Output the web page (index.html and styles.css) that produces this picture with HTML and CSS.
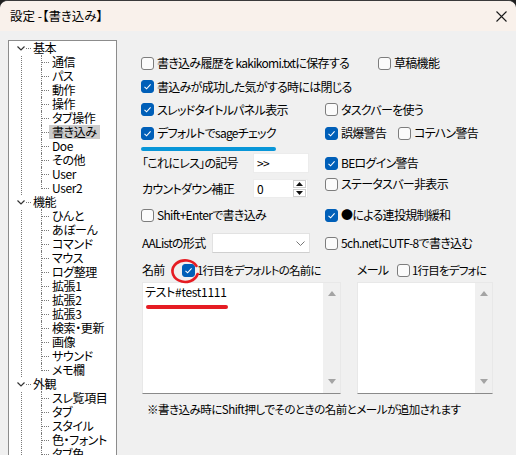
FILE: index.html
```html
<!DOCTYPE html>
<html lang="ja">
<head>
<meta charset="utf-8">
<title>設定 -【書き込み】</title>
<link rel="stylesheet" href="styles.css">
</head>
<body>
<div class="window">
  <div class="titlebar">
    <span class="title">設定 -【書き込み】</span>
    <svg class="close" width="11" height="11" viewBox="0 0 11 11"><path d="M0.5 0.5 L10.5 10.5 M10.5 0.5 L0.5 10.5" stroke="#1a1a1a" stroke-width="1.1" fill="none"/></svg>
  </div>
  <div class="client">
    <ul class="tree">
      <li class="node">
        <div class="trow"><span class="chev"><svg width="8" height="5" viewBox="0 0 8 5"><path d="M0.5 0.5 L4 4 L7.5 0.5" stroke="#333" stroke-width="1.2" fill="none"/></svg></span><span class="hconn top"></span><span class="tlabel top">基本</span></div>
        <ul class="kids">
          <li><div class="trow"><span class="hconn"></span><span class="tlabel">通信</span></div></li>
          <li><div class="trow"><span class="hconn"></span><span class="tlabel">パス</span></div></li>
          <li><div class="trow"><span class="hconn"></span><span class="tlabel">動作</span></div></li>
          <li><div class="trow"><span class="hconn"></span><span class="tlabel">操作</span></div></li>
          <li><div class="trow"><span class="hconn"></span><span class="tlabel">タブ操作</span></div></li>
          <li><div class="trow"><span class="hconn"></span><span class="tlabel sel">書き込み</span></div></li>
          <li><div class="trow"><span class="hconn"></span><span class="tlabel">Doe</span></div></li>
          <li><div class="trow"><span class="hconn"></span><span class="tlabel">その他</span></div></li>
          <li><div class="trow"><span class="hconn"></span><span class="tlabel">User</span></div></li>
          <li class="last"><div class="trow"><span class="hconn"></span><span class="tlabel">User2</span></div></li>
        </ul>
      </li>
      <li class="node">
        <div class="trow"><span class="chev"><svg width="8" height="5" viewBox="0 0 8 5"><path d="M0.5 0.5 L4 4 L7.5 0.5" stroke="#333" stroke-width="1.2" fill="none"/></svg></span><span class="hconn top"></span><span class="tlabel top">機能</span></div>
        <ul class="kids">
          <li><div class="trow"><span class="hconn"></span><span class="tlabel">ひんと</span></div></li>
          <li><div class="trow"><span class="hconn"></span><span class="tlabel">あぼーん</span></div></li>
          <li><div class="trow"><span class="hconn"></span><span class="tlabel">コマンド</span></div></li>
          <li><div class="trow"><span class="hconn"></span><span class="tlabel">マウス</span></div></li>
          <li><div class="trow"><span class="hconn"></span><span class="tlabel">ログ整理</span></div></li>
          <li><div class="trow"><span class="hconn"></span><span class="tlabel">拡張1</span></div></li>
          <li><div class="trow"><span class="hconn"></span><span class="tlabel">拡張2</span></div></li>
          <li><div class="trow"><span class="hconn"></span><span class="tlabel">拡張3</span></div></li>
          <li><div class="trow"><span class="hconn"></span><span class="tlabel">検索・更新</span></div></li>
          <li><div class="trow"><span class="hconn"></span><span class="tlabel">画像</span></div></li>
          <li><div class="trow"><span class="hconn"></span><span class="tlabel">サウンド</span></div></li>
          <li class="last"><div class="trow"><span class="hconn"></span><span class="tlabel">メモ欄</span></div></li>
        </ul>
      </li>
      <li class="node">
        <div class="trow"><span class="chev"><svg width="8" height="5" viewBox="0 0 8 5"><path d="M0.5 0.5 L4 4 L7.5 0.5" stroke="#333" stroke-width="1.2" fill="none"/></svg></span><span class="hconn top"></span><span class="tlabel top">外観</span></div>
        <ul class="kids">
          <li><div class="trow"><span class="hconn"></span><span class="tlabel">スレ覧項目</span></div></li>
          <li><div class="trow"><span class="hconn"></span><span class="tlabel">タブ</span></div></li>
          <li><div class="trow"><span class="hconn"></span><span class="tlabel">スタイル</span></div></li>
          <li><div class="trow"><span class="hconn"></span><span class="tlabel">色・フォント</span></div></li>
          <li><div class="trow"><span class="hconn"></span><span class="tlabel">タブ色</span></div></li>
        </ul>
      </li>
    </ul>

    <div class="pane">
      <div class="frow r1">
        <label class="cb"><span class="box"></span>書き込み履歴を kakikomi.txtに保存する</label>
        <label class="cb"><span class="box"></span>草稿機能</label>
      </div>
      <div class="frow r2">
        <label class="cb"><span class="box on"><svg width="11" height="11" viewBox="0 0 11 11"><path d="M2.5 5.8 L4.6 7.8 L8.6 3.4" stroke="#fff" stroke-width="1.1" fill="none"/></svg></span>書込みが成功した気がする時には閉じる</label>
      </div>
      <div class="frow r3">
        <label class="cb"><span class="box on"><svg width="11" height="11" viewBox="0 0 11 11"><path d="M2.5 5.8 L4.6 7.8 L8.6 3.4" stroke="#fff" stroke-width="1.1" fill="none"/></svg></span>スレッドタイトルパネル表示</label>
        <label class="cb"><span class="box"></span>タスクバーを使う</label>
      </div>
      <div class="frow r4">
        <label class="cb"><span class="box on"><svg width="11" height="11" viewBox="0 0 11 11"><path d="M2.5 5.8 L4.6 7.8 L8.6 3.4" stroke="#fff" stroke-width="1.1" fill="none"/></svg></span>デフォルトでsageチェック</label>
        <div class="pair">
          <label class="cb first"><span class="box on"><svg width="11" height="11" viewBox="0 0 11 11"><path d="M2.5 5.8 L4.6 7.8 L8.6 3.4" stroke="#fff" stroke-width="1.1" fill="none"/></svg></span>誤爆警告</label>
          <label class="cb"><span class="box"></span>コテハン警告</label>
        </div>
      </div>
      <div class="barrow"><div class="bluebar"></div></div>
      <div class="frow r5">
        <div class="field"><span class="flabel w112">「これにレス」の記号</span><span class="edit">&gt;&gt;</span></div>
        <label class="cb"><span class="box on"><svg width="11" height="11" viewBox="0 0 11 11"><path d="M2.5 5.8 L4.6 7.8 L8.6 3.4" stroke="#fff" stroke-width="1.1" fill="none"/></svg></span>BEログイン警告</label>
      </div>
      <div class="frow r6">
        <div class="field spinfield"><span class="flabel w112">カウントダウン補正</span>
          <span class="spin"><span class="spinval">0</span><span class="spinbtns"><span class="sbtn"><svg width="7" height="4" viewBox="0 0 7 4"><path d="M0 4 L3.5 0 L7 4 Z" fill="#111"/></svg></span><span class="sbtn"><svg width="7" height="4" viewBox="0 0 7 4"><path d="M0 0 L3.5 4 L7 0 Z" fill="#111"/></svg></span></span></span>
        </div>
        <label class="cb up"><span class="box"></span>ステータスバー非表示</label>
      </div>
      <div class="frow r7">
        <label class="cb"><span class="box"></span>Shift+Enterで書き込み</label>
        <label class="cb"><span class="box on"><svg width="11" height="11" viewBox="0 0 11 11"><path d="M2.5 5.8 L4.6 7.8 L8.6 3.4" stroke="#fff" stroke-width="1.1" fill="none"/></svg></span>●による連投規制緩和</label>
      </div>
      <div class="frow r8">
        <div class="field"><span class="flabel w71">AAListの形式</span>
          <span class="combo"><svg width="9" height="5" viewBox="0 0 9 5"><path d="M0.5 0.5 L4.5 4.5 L8.5 0.5" stroke="#777" stroke-width="1" fill="none"/></svg></span>
        </div>
        <label class="cb"><span class="box"></span>5ch.netにUTF-8で書き込む</label>
      </div>

      <div class="lower">
        <div class="hdr">
          <span class="hlabel">名前</span>
          <span class="mark"><span class="box on"><svg width="11" height="11" viewBox="0 0 11 11"><path d="M2.5 5.8 L4.6 7.8 L8.6 3.4" stroke="#fff" stroke-width="1.1" fill="none"/></svg></span><svg class="ring" width="32" height="28" viewBox="0 0 32 28"><path d="M26.5 8 A12.8 10.8 0 1 0 27.6 16" stroke="#e51c23" stroke-width="2.6" fill="none" stroke-linecap="round"/></svg></span>
          <span class="htext">1行目をデフォルトの名前に</span>
        </div>
        <div class="hdr">
          <span class="hlabel">メール</span>
          <span class="mark"><span class="box"></span></span>
          <span class="htext">1行目をデフォに</span>
        </div>
        <div class="ta">
          <div class="tacontent">
            <div class="taline">テスト#test1111</div>
            <div class="redline"></div>
          </div>
          <div class="sb"><svg width="8" height="5" viewBox="0 0 8 5"><path d="M0 5 L4 0 L8 5 Z" fill="#a4a4a4"/></svg><svg width="8" height="5" viewBox="0 0 8 5"><path d="M0 0 L4 5 L8 0 Z" fill="#a4a4a4"/></svg></div>
        </div>
        <div class="ta">
          <div class="tacontent"></div>
          <div class="sb"><svg width="8" height="5" viewBox="0 0 8 5"><path d="M0 5 L4 0 L8 5 Z" fill="#a4a4a4"/></svg><svg width="8" height="5" viewBox="0 0 8 5"><path d="M0 0 L4 5 L8 0 Z" fill="#a4a4a4"/></svg></div>
        </div>
      </div>
      <p class="note">※書き込み時にShift押しでそのときの名前とメールが追加されます</p>
    </div>
  </div>
</div>
</body>
</html>
```

FILE: styles.css
```css
html, body {
  margin: 0;
  padding: 0;
  background: #1f1f1f;
}
body {
  width: 516px;
  height: 455px;
  overflow: hidden;
  font-family: "Noto Sans CJK JP", "Noto Sans", sans-serif;
  font-size: 12px;
  font-feature-settings: "palt";
  color: #000;
}
.window {
  height: 455px;
  box-sizing: border-box;
  background: #f0f0f0;
  border-top: 1px solid #3a3a3a;
  border-radius: 8px 8px 0 0;
  overflow: hidden;
}
.titlebar {
  height: 30px;
  background: #f9f1eb;
  display: flex;
  align-items: center;
  justify-content: space-between;
  padding: 0 9px 0 10px;
}
.title {
  font-size: 12.5px;
  line-height: 16px;
}
.close { display: block; }

.client {
  display: flex;
  align-items: flex-start;
  padding: 9px 0 0 8px;
}

/* tree */
.tree {
  flex: none;
  width: 109px;
  height: 440px;
  box-sizing: border-box;
  margin: 0;
  padding: 0 0 0 12px;
  list-style: none;
  background: #fff;
  border: 1px solid #8c8c8c;
  overflow: hidden;
}
.tree ul { list-style: none; margin: 0; padding: 0; }
.node { border-left: 1px dotted #7a7a7a; }
.trow {
  display: flex;
  align-items: flex-start;
  height: 14px;
  line-height: 14px;
  white-space: nowrap;
}
.chev {
  flex: none;
  width: 8px;
  height: 14px;
  margin-left: -5px;
  background: #fff;
  display: flex;
  align-items: center;
  justify-content: center;
}
.chev svg { display: block; }
.hconn {
  flex: none;
  width: 7px;
  height: 7px;
  border-bottom: 1px dotted #7a7a7a;
}
.hconn.top { width: 5px; margin-left: 1px; }
.tlabel {
  padding: 0 3px;
  height: 14px;
  font-size: 12px;
  letter-spacing: -0.4px;
}
.tlabel.top { padding: 0 2px; }
.tlabel.sel { background: #cccccc; }
.kids { margin-left: 19px !important; }
.kids li { border-left: 1px dotted #7a7a7a; }
.kids li.last { border-left: none; }
.kids li.last .hconn { border-left: 1px dotted #7a7a7a; }

/* right pane */
.pane {
  flex: 1;
  margin-left: 24px;
  padding-top: 11px;
  letter-spacing: -0.7px;
}
.frow {
  display: grid;
  grid-template-columns: 184px auto;
  align-items: center;
  white-space: nowrap;
}
.r1 { height: 24px; grid-template-columns: 237px auto; }
.r2 { height: 23px; grid-template-columns: auto; }
.r3 { height: 23px; }
.r4 { height: 24px; }
.r5 { height: 14px; }
.r6 { height: 38px; }
.r7 { height: 20px; }
.r8 { height: 36px; }

.cb {
  display: flex;
  align-items: center;
  line-height: 16px;
  white-space: nowrap;
}
.box {
  flex: none;
  width: 13px;
  height: 13px;
  box-sizing: border-box;
  border: 1px solid #7d7d7d;
  border-radius: 3px;
  background: #fbfbfb;
  margin-right: 3px;
  display: flex;
  align-items: center;
  justify-content: center;
}
.box.on {
  background: #005fb8;
  border-color: #005fb8;
}
.box svg { display: block; }
.pair { display: flex; align-items: center; }
.pair .first { width: 73px; }

.barrow { height: 6px; }
.bluebar {
  margin-top: 2px;
  width: 135px;
  height: 4px;
  border-radius: 2px;
  background: #0896d8;
}

.field { display: flex; align-items: center; }
.flabel { padding-left: 1px; box-sizing: border-box; line-height: 16px; }
.w112 { width: 112px; }
.w71 { width: 71px; }
.edit {
  width: 56px;
  height: 20px;
  box-sizing: border-box;
  background: #fff;
  border: 1px solid #ececec;
  padding: 0 3px;
  line-height: 18px;
  font-size: 12px;
}
.spinfield { margin-top: 5px; }
.up { margin-bottom: 4px; }
.spin {
  width: 55px;
  height: 19px;
  box-sizing: border-box;
  background: #fff;
  border: 1px solid #ececec;
  display: flex;
  justify-content: space-between;
}
.spinval { padding-left: 3px; line-height: 17px; }
.spinbtns {
  width: 13px;
  display: flex;
  flex-direction: column;
  gap: 1px;
  padding: 0 1px 0 0;
}
.sbtn {
  flex: 1;
  border: 1px solid #cfcfcf;
  background: #fff;
  display: flex;
  align-items: center;
  justify-content: center;
}
.sbtn svg { display: block; }
.combo {
  width: 98px;
  height: 20px;
  box-sizing: border-box;
  background: #fff;
  border: 1px solid #e2e2e2;
  border-bottom-color: #cfcfcf;
  display: flex;
  align-items: center;
  justify-content: flex-end;
  padding-right: 4px;
}
.combo svg { display: block; }

.lower {
  display: grid;
  grid-template-columns: 199px 136px;
  column-gap: 16px;
  margin-left: 1px;
}
.hdr {
  display: flex;
  align-items: center;
  height: 18px;
  margin-bottom: 3px;
  white-space: nowrap;
}
.hlabel { width: 40px; line-height: 16px; }
.mark { position: relative; display: flex; }
.mark .box { margin-right: 2px; }
.ring {
  position: absolute;
  left: -12px;
  top: -6px;
  pointer-events: none;
}
.htext { font-size: 11.5px; line-height: 16px; letter-spacing: -0.8px; }
.ta {
  height: 112px;
  box-sizing: border-box;
  background: #fff;
  border: 1px solid #e8e8e8;
  border-bottom-color: #8a8a8a;
  display: flex;
}
.tacontent { flex: 1; padding: 0 2px; }
.taline { line-height: 16px; padding-top: 1px; letter-spacing: -0.3px; }
.redline {
  margin: 5px 0 0 1px;
  width: 82px;
  height: 4px;
  border-radius: 2px;
  background: #e51c23;
}
.sb {
  width: 17px;
  background: #f0f0f0;
  display: flex;
  flex-direction: column;
  align-items: center;
  justify-content: space-between;
  padding: 8px 0 9px;
}
.sb svg { display: block; }
.note {
  margin: 7px 0 0 6px;
  line-height: 16px;
  font-size: 11.5px;
  letter-spacing: -0.5px;
  white-space: nowrap;
}
```
